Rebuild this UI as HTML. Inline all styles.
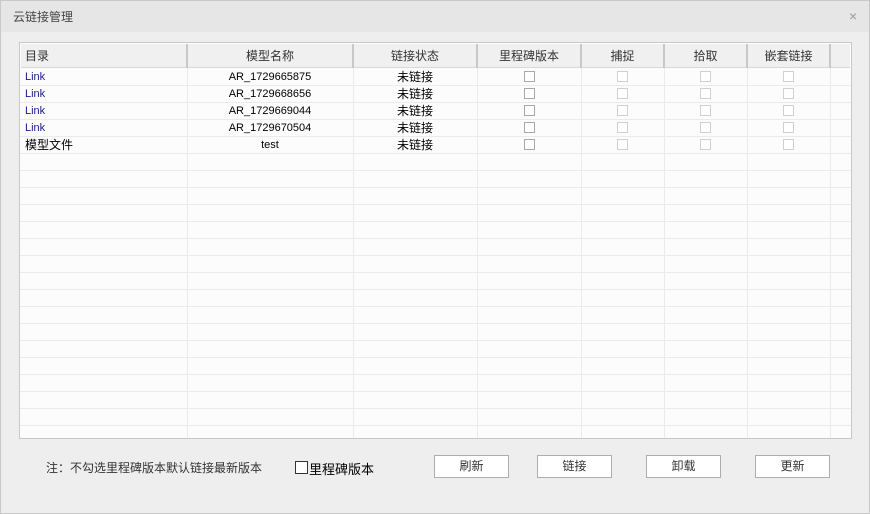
<!DOCTYPE html>
<html><head><meta charset="utf-8"><style>
*{margin:0;padding:0;box-sizing:border-box}
body{width:870px;height:514px;overflow:hidden;background:#eeeeee;font-family:"Liberation Sans","Noto Sans CJK SC",sans-serif;font-size:12px;color:#000;position:relative}
.win{position:absolute;left:0;top:0;width:870px;height:514px;border:1px solid #c8c8c8;background:#eeeeee}
.title{position:absolute;left:0;top:0;width:868px;height:31px;background:#e6e6e6}
.title span{position:absolute;left:12px;top:7px;font-size:12px;color:#444}
.x{position:absolute;left:848px;top:7px;color:#999;font-size:14px}
.grid{position:absolute;left:19px;top:42px;width:833px;height:397px;border:1px solid #c8c8c8;background:#fcfcfc;overflow:hidden}
.hdr{position:absolute;left:1px;top:1px;width:829px;height:24px;background:#f0f0f0;border-bottom:1px solid #d8d8d8}
.hc{position:absolute;top:0;height:24px;line-height:24px;text-align:center;color:#333;font-size:12px;border-right:2px solid #c8c8c8}
.vl{position:absolute;top:25px;bottom:0;width:1px;background:#ebebeb}
.hl{position:absolute;left:0;width:831px;height:1px;background:#ebebeb}
.c{position:absolute;height:17px;line-height:17px;text-align:center;font-size:12px}
.cb{position:absolute;width:11px;height:11px;border:1px solid #a8a8a8;background:#fff}
.cb.d{border-color:#d0d0d0}
.btn{position:absolute;top:455px;height:23px;width:75px;border:1px solid #adadad;background:#fff;text-align:center;line-height:21px;font-size:12px;color:#333}
</style></head><body>
<div class="win">
<div class="title"><span>云链接管理</span><div class="x">×</div></div>
</div>
<div class="grid">
<div class="hdr">
<div class="hc" style="left:0;width:167px;text-align:left;padding-left:4px">目录</div>
<div class="hc" style="left:167px;width:166px">模型名称</div>
<div class="hc" style="left:333px;width:124px">链接状态</div>
<div class="hc" style="left:457px;width:104px">里程碑版本</div>
<div class="hc" style="left:561px;width:83px">捕捉</div>
<div class="hc" style="left:644px;width:83px">拾取</div>
<div class="hc" style="left:727px;width:83px">嵌套链接</div>
</div>
<div class="vl" style="left:167px"></div><div class="vl" style="left:333px"></div><div class="vl" style="left:457px"></div><div class="vl" style="left:561px"></div><div class="vl" style="left:644px"></div><div class="vl" style="left:727px"></div><div class="vl" style="left:810px"></div>
<div id="rows"></div>
</div>
<div style="position:absolute;left:46px;top:459px;font-size:12px;color:#333">注：不勾选里程碑版本默认链接最新版本</div>
<div class="cb" style="left:295px;top:461px;width:13px;height:13px;border-color:#333"></div>
<div style="position:absolute;left:309px;top:459px;font-size:13px">里程碑版本</div>
<div class="btn" style="left:434px">刷新</div>
<div class="btn" style="left:537px">链接</div>
<div class="btn" style="left:646px">卸载</div>
<div class="btn" style="left:755px">更新</div>
<script>
var r=document.getElementById('rows'),h='';
for(var y=42;y<=395;y+=17)h+='<div class="hl" style="top:'+y+'px"></div>';
var d=[['Link','AR_1729665875'],['Link','AR_1729668656'],['Link','AR_1729669044'],['Link','AR_1729670504'],['模型文件','test']];
d.forEach(function(e,i){var t=26+i*17;
h+='<div class="c" style="left:5px;top:'+t+'px;text-align:left;color:'+(i<4?'#1a1a8c':'#000')+';font-size:'+(i<4?11:12)+'px">'+e[0]+'</div>';
h+='<div class="c" style="left:167px;width:166px;top:'+t+'px;font-size:11px">'+e[1]+'</div>';
h+='<div class="c" style="left:333px;width:124px;top:'+t+'px">未链接</div>';
h+='<div class="cb" style="left:504px;top:'+(t+2)+'px"></div>';
[597,680,763].forEach(function(x){h+='<div class="cb d" style="left:'+x+'px;top:'+(t+2)+'px"></div>';});
});
r.innerHTML=h;
</script>
</body></html>
